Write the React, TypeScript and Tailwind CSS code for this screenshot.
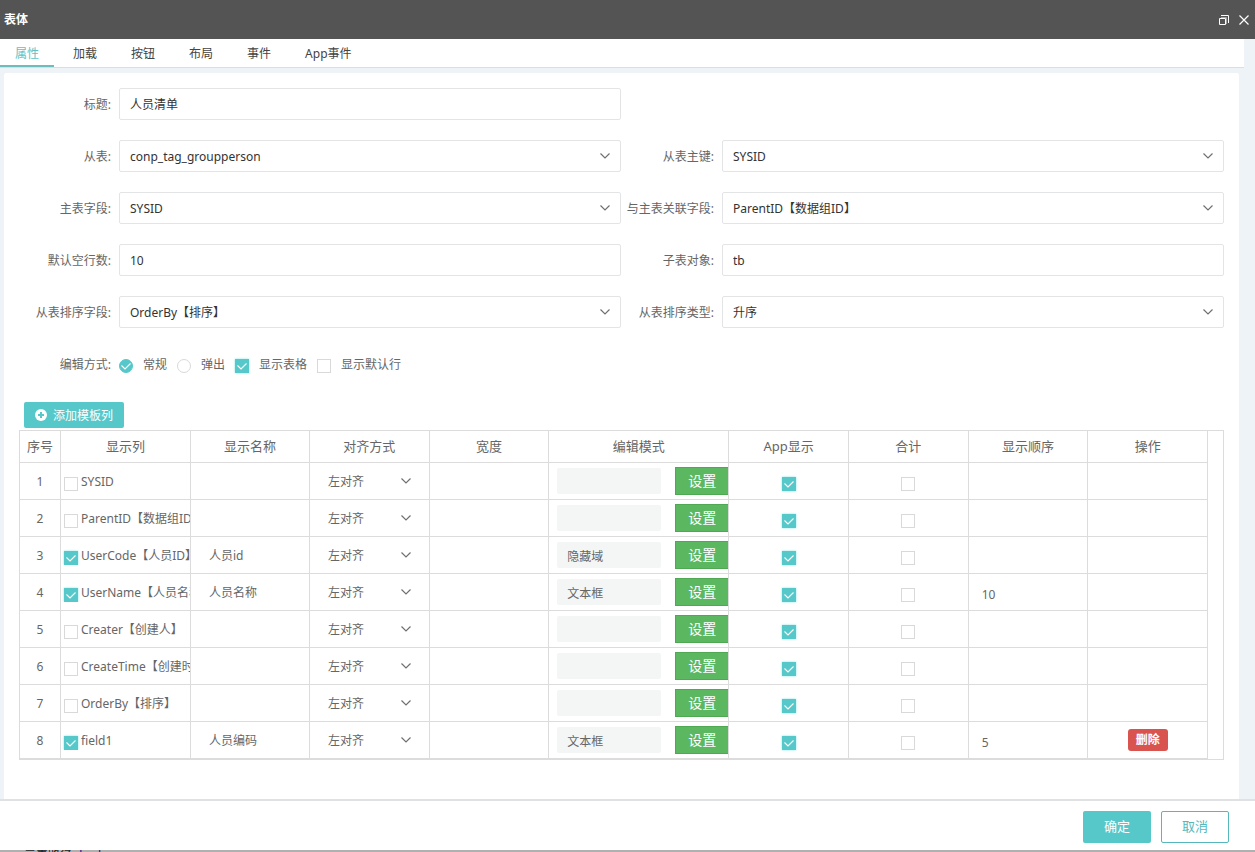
import { useState } from 'react';

type Option = { label: string; name: string; value: string; type?: 'text' | 'select' };

type Row = {
  id: number;
  field: string;
  shown: boolean;
  title: string;
  mode: string;
  order: string;
  removable?: boolean;
};

const tabs = ['属性', '加载', '按钮', '布局', '事件', 'App事件'];

const fields: Option[] = [
  { label: '从表:', name: 'subTable', value: 'conp_tag_groupperson', type: 'select' },
  { label: '从表主键:', name: 'subKey', value: 'SYSID', type: 'select' },
  { label: '主表字段:', name: 'mainField', value: 'SYSID', type: 'select' },
  { label: '与主表关联字段:', name: 'linkField', value: 'ParentID【数据组ID】', type: 'select' },
  { label: '默认空行数:', name: 'emptyRows', value: '10' },
  { label: '子表对象:', name: 'subObject', value: 'tb' },
  { label: '从表排序字段:', name: 'sortField', value: 'OrderBy【排序】', type: 'select' },
  { label: '从表排序类型:', name: 'sortType', value: '升序', type: 'select' },
];

const columns = [
  { title: '序号', width: 'w-[41px]' },
  { title: '显示列', width: 'w-[130px]' },
  { title: '显示名称', width: 'w-[119px]' },
  { title: '对齐方式', width: '' },
  { title: '宽度', width: '' },
  { title: '编辑模式', width: 'w-[180px]' },
  { title: 'App显示', width: '' },
  { title: '合计', width: '' },
  { title: '显示顺序', width: '' },
  { title: '操作', width: '' },
];

const rows: Row[] = [
  { id: 1, field: 'SYSID', shown: false, title: '', mode: '', order: '' },
  { id: 2, field: 'ParentID【数据组ID】', shown: false, title: '', mode: '', order: '' },
  { id: 3, field: 'UserCode【人员ID】', shown: true, title: '人员id', mode: '隐藏域', order: '' },
  { id: 4, field: 'UserName【人员名称】', shown: true, title: '人员名称', mode: '文本框', order: '10' },
  { id: 5, field: 'Creater【创建人】', shown: false, title: '', mode: '', order: '' },
  { id: 6, field: 'CreateTime【创建时间】', shown: false, title: '', mode: '', order: '' },
  { id: 7, field: 'OrderBy【排序】', shown: false, title: '', mode: '', order: '' },
  { id: 8, field: 'field1', shown: true, title: '人员编码', mode: '文本框', order: '5', removable: true },
];

const Chevron = ({ className }: { className: string }) => (
  <svg className={`pointer-events-none absolute top-1/2 -translate-y-1/2 ${className}`} width="10" height="6" viewBox="0 0 10 6" fill="none" stroke="#707070" strokeWidth="1.2">
    <path d="M0.5 0.5 L5 5 L9.5 0.5" />
  </svg>
);

type TickProps = {
  label?: string;
  title?: string;
  type?: 'checkbox' | 'radio';
  name?: string;
  checked?: boolean;
  className?: string;
};

const Tick = ({ label, title, type = 'checkbox', name, checked, className = 'gap-2.5' }: TickProps) => (
  <label className={`flex items-center whitespace-nowrap ${className}`}>
    <span className="relative mt-[3px] block size-3.5 shrink-0">
      <input
        type={type}
        name={name}
        aria-label={title}
        defaultChecked={checked}
        className={`peer block size-3.5 appearance-none border border-[#d9d9d9] bg-white checked:border-[#56c8ca] checked:bg-[#56c8ca] ${
          type === 'radio' ? 'rounded-full' : 'checked:shadow-[0_0_2px_#7fe3e5]'
        }`}
      />
      <svg className="pointer-events-none absolute inset-0 hidden peer-checked:block" width="14" height="14" viewBox="0 0 14 14" fill="none" stroke="#fff" strokeWidth="1.1">
        <path d="M2.5 6.5 L6 10 L11.5 4.5" />
      </svg>
    </span>
    {label && <span>{label}</span>}
  </label>
);

const Field = ({ label, name, value, type = 'text' }: Option) => (
  <div className="flex items-center">
    <label htmlFor={name} className="w-[101px] shrink-0 pt-0.5 pr-2 text-right whitespace-nowrap text-[#666]">
      {label}
    </label>
    <div className="relative flex-1">
      {type === 'select' ? (
        <>
          <select id={name} className="block h-8 w-full appearance-none rounded-xs border border-[#e2e4e6] bg-white px-2.5 pt-0.5 text-[#333]">
            <option>{value}</option>
          </select>
          <Chevron className="right-[11px]" />
        </>
      ) : (
        <input id={name} type="text" defaultValue={value} className="block h-8 w-full rounded-xs border border-[#e2e4e6] bg-white px-2.5 text-[#333]" />
      )}
    </div>
  </div>
);

const App = () => {
  const [active, setActive] = useState(tabs[0]);

  return (
    <div className="flex h-screen flex-col overflow-hidden bg-[#edf3f6] font-['Noto_Sans','Noto_Sans_CJK_SC',sans-serif] text-xs text-[#666]">
      <header className="flex h-[39px] shrink-0 items-center justify-between bg-[#545454] pr-1.5 pl-1 text-white">
        <h1 className="font-bold">表体</h1>
        <div className="flex items-center gap-2.5">
          <button type="button" aria-label="还原">
            <svg width="10" height="10" viewBox="0 0 10 10" fill="none" stroke="#fff">
              <path d="M0.5 3.5 H6.5 V9.5 H0.5 Z" />
              <path d="M2 0.5 H9.5 V8" />
              <path d="M2 2.5 H7.5 V9" stroke="#a5a5a5" />
            </svg>
          </button>
          <button type="button" aria-label="关闭">
            <svg width="10" height="10" viewBox="0 0 10 10" fill="none" stroke="#fff" strokeWidth="1.2">
              <path d="M0.5 0.5 L9.5 9.5 M9.5 0.5 L0.5 9.5" />
            </svg>
          </button>
        </div>
      </header>

      <nav className="mr-[11px] flex h-[29px] shrink-0 gap-1 border-b border-[#dadedf] bg-white">
        {tabs.map((tab) => (
          <button
            key={tab}
            type="button"
            onClick={() => setActive(tab)}
            className={`px-[15px] ${tab === active ? 'border-b-2 border-[#6dbdbf] pt-1 text-[#5cc3c5]' : 'pt-0.5 text-[#444]'}`}
          >
            {tab}
          </button>
        ))}
      </nav>

      <main className="mt-[5px] mr-4 ml-1 flex-1 overflow-hidden rounded-t-xs bg-white px-[15px] pt-[15px]">
        <form className="-ml-px grid grid-cols-2 gap-y-5">
          <Field label="标题:" name="caption" value="人员清单" />
          <div />
          {fields.map((field) => (
            <Field key={field.name} {...field} />
          ))}
        </form>

        {/* Edit mode */}
        <div className="mt-7 flex items-center">
          <span className="w-[100px] pr-2 text-right">编辑方式:</span>
          <div className="flex gap-2.5">
            <Tick type="radio" name="editType" label="常规" checked />
            <Tick type="radio" name="editType" label="弹出" />
            <Tick label="显示表格" checked />
            <Tick label="显示默认行" />
          </div>
        </div>

        <button type="button" className="mt-[29px] mb-0.5 ml-[5px] flex h-[26px] items-center gap-1.5 rounded-xs bg-[#56c8ca] px-[11px] text-white">
          <svg width="12" height="12" viewBox="0 0 12 12">
            <circle cx="6" cy="6" r="6" fill="#fff" />
            <path d="M6 3 V9 M3 6 H9" stroke="#56c8ca" strokeWidth="2" />
          </svg>
          <span className="pt-0.5">添加模板列</span>
        </button>

        <div className="border border-[#dcdcdc] pr-[15px]">
          <table className="w-full table-fixed border-separate border-spacing-0">
            <thead>
              <tr>
                {columns.map((column) => (
                  <th key={column.title} scope="col" className={`h-8 border-r border-b border-[#dcdcdc] p-0 text-[13px] font-normal ${column.width}`}>
                    {column.title}
                  </th>
                ))}
              </tr>
            </thead>
            <tbody className="[&_td]:h-[37px] [&_td]:border-r [&_td]:border-b [&_td]:border-[#dcdcdc]">
              {rows.map((row) => (
                <tr key={row.id}>
                  <td className="pt-0.5 text-center">{row.id}</td>
                  <td className="pt-0.5">
                    <div className="overflow-hidden pl-[3px]">
                      <Tick label={row.field} checked={row.shown} className="gap-[3px]" />
                    </div>
                  </td>
                  <td className="pt-0.5">
                    <input type="text" aria-label="显示名称" defaultValue={row.title} className="block w-full px-[18px]" />
                  </td>
                  <td>
                    <div className="relative">
                      <select aria-label="对齐方式" className="block h-7 w-full appearance-none px-[18px] pt-0.5">
                        <option>左对齐</option>
                      </select>
                      <Chevron className="right-[18px]" />
                    </div>
                  </td>
                  <td className="pt-0.5">
                    <input type="text" aria-label="宽度" className="block w-full px-[13px]" />
                  </td>
                  <td>
                    <div className="flex items-center justify-between overflow-hidden pl-2">
                      <input type="text" aria-label="编辑模式" readOnly defaultValue={row.mode} className="block h-[26px] w-[104px] rounded-xs bg-[#f4f6f6] px-2.5 pt-0.5" />
                      <button type="button" className="h-7 w-[53px] border border-r-0 border-[#4fa952] bg-[#5cb860] text-sm text-white">
                        设置
                      </button>
                    </div>
                  </td>
                  <td className="pt-0.5">
                    <Tick title="App显示" checked className="justify-center" />
                  </td>
                  <td className="pt-0.5">
                    <Tick title="合计" className="justify-center" />
                  </td>
                  <td className="pt-1">
                    <input type="text" aria-label="显示顺序" defaultValue={row.order} className="block w-full px-[13px] pt-0.5" />
                  </td>
                  <td className="text-center">
                    {row.removable && (
                      <button type="button" className="h-[22px] rounded-[3px] bg-[#d9534f] px-2 font-bold text-white">
                        删除
                      </button>
                    )}
                  </td>
                </tr>
              ))}
            </tbody>
          </table>
        </div>
      </main>

      <footer className="flex h-[51px] shrink-0 items-center justify-end gap-2.5 border-t-2 border-[#dfe1e2] bg-white pt-0.5 pr-[26px] text-[13px]">
        <button type="button" className="h-8 w-[68px] rounded-xs bg-[#56c8ca] text-white">
          确定
        </button>
        <button type="button" className="h-8 w-[68px] rounded-xs border border-[#56b8bc] bg-white text-[#56b8bc]">
          取消
        </button>
      </footer>

      {/* Editor status bar showing from under the dialog */}
      <div className="flex h-0.5 shrink-0 gap-1 overflow-hidden bg-[#b0b0b0] pl-6 leading-3 text-[#222]">
        <span>元素路径:</span>
        <a href="#body" className="text-[#1a0a8c]">body</a>
      </div>
    </div>
  );
};

export default App;
